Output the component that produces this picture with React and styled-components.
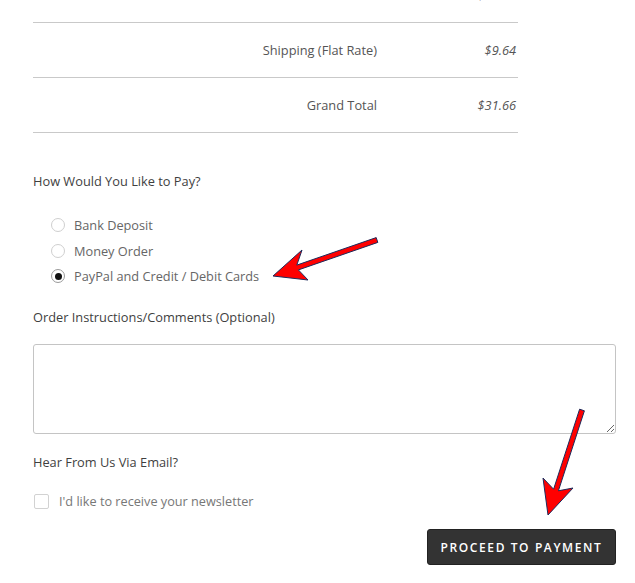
import React from "react";
import styled, { createGlobalStyle } from "styled-components";

const Global = createGlobalStyle`
  html, body { margin: 0; padding: 0; background: #fff; }
  body { font-family: "Open Sans", "Liberation Sans", sans-serif; overflow: hidden; }
  * { box-sizing: border-box; }
`;

const Page = styled.div`
  position: relative;
  width: 635px;
  height: 583px;
  overflow: hidden;
`;

const Content = styled.div`
  width: 616px;
  padding-left: 33px;
`;

const Totals = styled.div`
  width: 485px;
  margin-top: -32px;
`;

const TotalRow = styled.div`
  display: grid;
  grid-template-columns: 344px 1fr;
  align-items: center;
  height: 55px;
  border-bottom: 1px solid #c9c9c9;
  font-size: 12.8px;
  color: #555;
`;

const TotalLabel = styled.div`
  text-align: right;
  white-space: nowrap;
`;

const TotalValue = styled.div`
  text-align: right;
  padding-right: 2px;
  font-style: italic;
`;

const Heading = styled.div`
  font-size: 12.8px;
  line-height: 20px;
  color: #3f3f3f;
  margin-top: ${(p) => p.$mt}px;
`;

const RadioList = styled.div`
  margin-top: 21.5px;
  padding-left: 18px;
`;

const RadioRow = styled.label`
  display: flex;
  align-items: center;
  height: 25.5px;
  font-size: 12.75px;
  color: #666;
  gap: 9px;
`;

const RadioDot = styled.span`
  width: 14px;
  height: 14px;
  border-radius: 50%;
  border: 1px solid ${(p) => (p.$checked ? "#9a9a9a" : "#cfcfcf")};
  background: #fff;
  display: flex;
  align-items: center;
  justify-content: center;
  &::after {
    content: "";
    width: 7px;
    height: 7px;
    border-radius: 50%;
    background: ${(p) => (p.$checked ? "#111" : "transparent")};
  }
`;

const Comments = styled.textarea`
  display: block;
  margin-top: 17px;
  width: 583px;
  height: 90px;
  border: 1px solid #c4c4c4;
  border-radius: 3px;
  background: #fff;
  font-family: inherit;
`;

const CheckRow = styled.label`
  display: flex;
  align-items: center;
  height: 20px;
  margin-top: 19px;
  gap: 10px;
  font-size: 12.7px;
  color: #777;
`;

const CheckBox = styled.span`
  width: 15px;
  height: 15px;
  margin-left: 1px;
  border: 1px solid #d2d2d2;
  border-radius: 2px;
  background: #fff;
`;

const Actions = styled.div`
  display: flex;
  justify-content: flex-end;
  margin-top: 18px;
`;

const ProceedButton = styled.button`
  width: 189px;
  height: 36px;
  border: 1px solid #222;
  border-radius: 3px;
  background: #333;
  color: #fff;
  font-family: "Open Sans", sans-serif;
  font-weight: 600;
  font-size: 12px;
  letter-spacing: 1.6px;
  text-transform: uppercase;
  padding: 0;
`;

const Annotations = styled.svg`
  position: absolute;
  left: 0;
  top: 0;
  pointer-events: none;
`;

export default function App() {
  return (
    <Page>
      <Global />
      <Content>
        <Totals>
          <TotalRow>
            <TotalLabel>Subtotal</TotalLabel>
            <TotalValue>$22.02</TotalValue>
          </TotalRow>
          <TotalRow>
            <TotalLabel>Shipping (Flat Rate)</TotalLabel>
            <TotalValue>$9.64</TotalValue>
          </TotalRow>
          <TotalRow>
            <TotalLabel>Grand Total</TotalLabel>
            <TotalValue>$31.66</TotalValue>
          </TotalRow>
        </Totals>

        <Heading $mt={38}>How Would You Like to Pay?</Heading>
        <RadioList>
          <RadioRow><RadioDot />Bank Deposit</RadioRow>
          <RadioRow><RadioDot />Money Order</RadioRow>
          <RadioRow><RadioDot $checked />PayPal and Credit / Debit Cards</RadioRow>
        </RadioList>

        <Heading $mt={18}>Order Instructions/Comments (Optional)</Heading>
        <Comments />

        <Heading $mt={18}>Hear From Us Via Email?</Heading>
        <CheckRow><CheckBox />I'd like to receive your newsletter</CheckRow>

        <Actions>
          <ProceedButton>Proceed to Payment</ProceedButton>
        </Actions>
      </Content>

      <Annotations width="635" height="583" viewBox="0 0 635 583">
        <polygon
          points="273,276 302,250 296.8,265.1 376.2,237.6 377.8,242.4 298.4,269.9 308,280"
          fill="#f00"
          stroke="#1d2b5c"
          strokeWidth="1"
          strokeLinejoin="round"
        />
        <polygon
          points="548,515 543,478 553.6,489.2 579.6,409.2 584.4,410.8 558.4,490.8 573,488"
          fill="#f00"
          stroke="#1d2b5c"
          strokeWidth="1"
          strokeLinejoin="round"
        />
      </Annotations>
    </Page>
  );
}
